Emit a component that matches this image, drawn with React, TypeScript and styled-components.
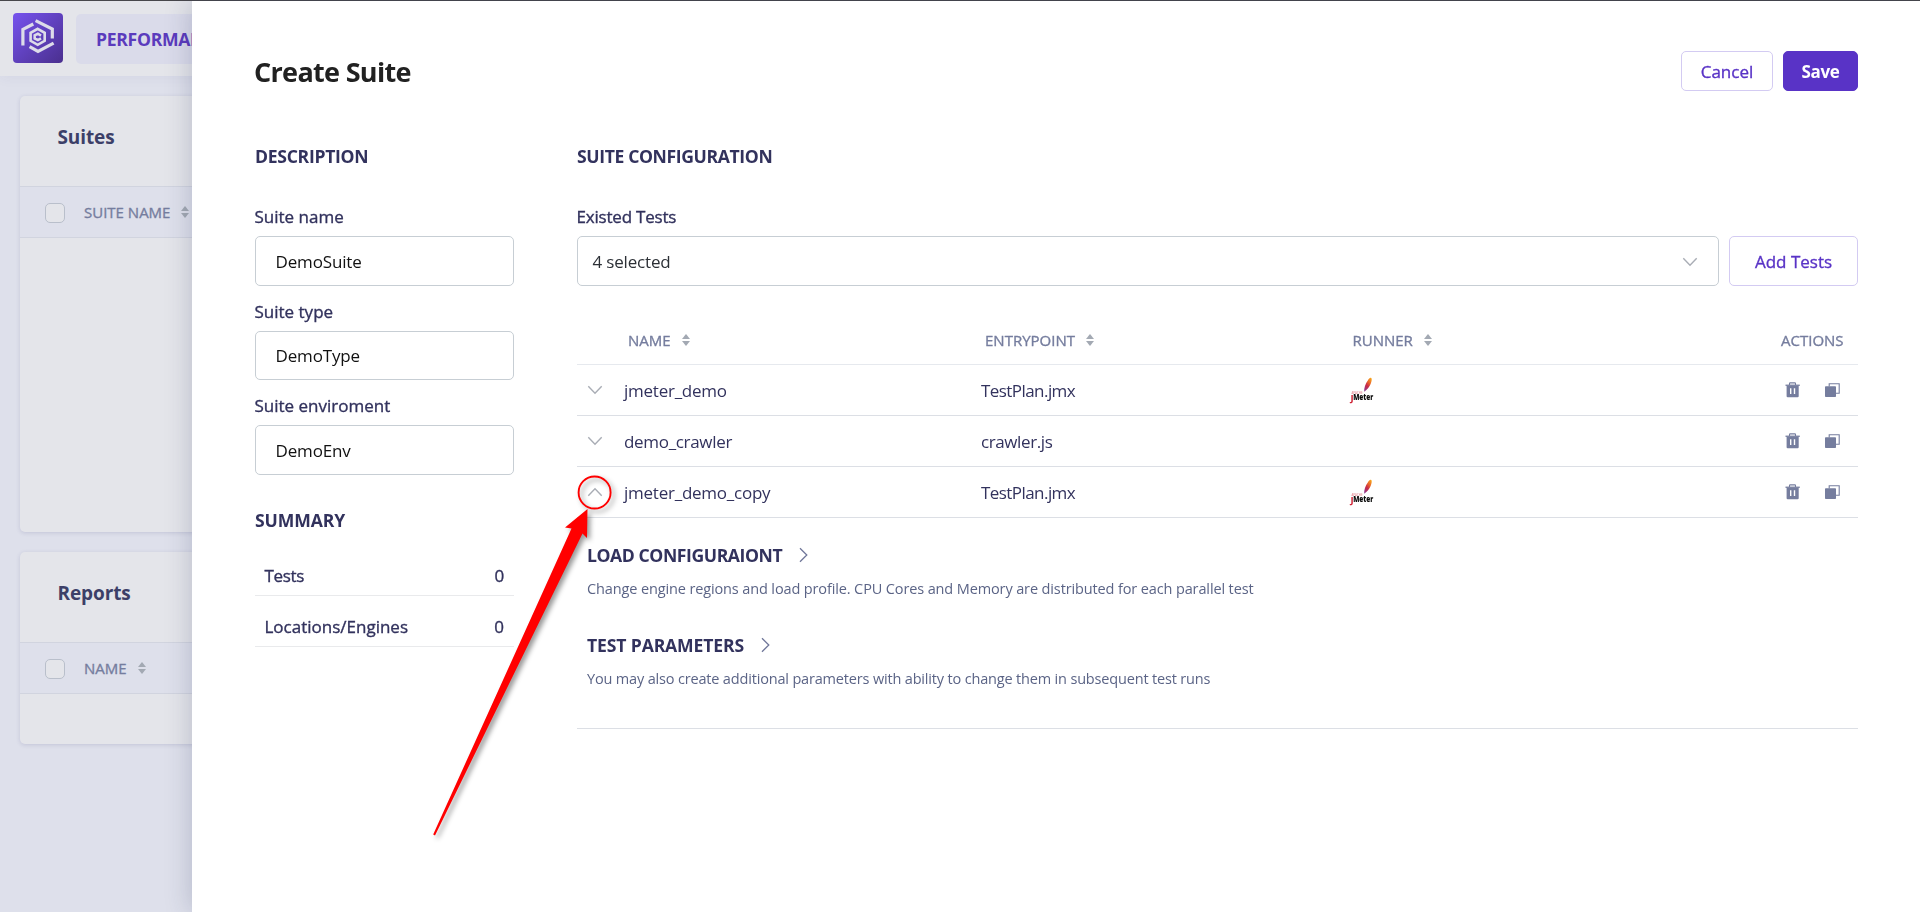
import React from 'react';
import styled, { createGlobalStyle, css } from 'styled-components';

const color = {
  text: '#32325d',
  muted: '#757d9e',
  desc: '#5b6486',
  accent: '#5933c6',
  accentLine: '#d3cbf2',
  inputLine: '#c7ced4',
  rowLine: '#dcdfe5',
};

const GlobalStyle = createGlobalStyle`
  *, *::before, *::after { box-sizing: border-box; }
  body {
    margin: 0;
    height: 912px;
    overflow: hidden;
    background: #dee0eb;
    font-family: "Segoe UI", "Open Sans", "Noto Sans", sans-serif;
    font-size: 17px;
    color: ${color.text};
  }
`;

type Tracked = { $track?: number };
const tracking = css<Tracked>`
  letter-spacing: ${({ $track = 0 }) => $track}px;
`;

/* Weight between medium and semibold, without widening the glyphs */
const semibold = css`
  font-weight: 500;
  -webkit-text-stroke: 0.35px currentColor;
`;

/* Page behind the drawer */

const Page = styled.div`
  height: 912px;
  display: flex;
  flex-direction: column;
  overflow: hidden;
  border-top: 1px solid #47474b;
`;

const Navbar = styled.header`
  height: 75px;
  flex: none;
  padding: 12px 13px;
  display: flex;
  gap: 13px;
  background: #e4e5ea;
  box-shadow: 0 2px 12px rgba(50, 50, 110, 0.05);
`;

const NavTab = styled.div`
  height: 50px;
  margin-top: 1px;
  padding: 0 20px;
  border-radius: 5px;
  background: #dadbea;
  color: #5b3bbd;
  font-size: 17.6px;
  font-weight: 700;
  letter-spacing: -0.3px;
  line-height: 50px;
`;

const Cards = styled.main`
  display: flex;
  flex-direction: column;
  gap: 20px;
  padding: 20px;
`;

const Card = styled.section<{ $height: number }>`
  height: ${({ $height }) => $height}px;
  border-radius: 5px;
  background: #e4e5ea;
  box-shadow: 0 1px 4px rgba(50, 50, 120, 0.16);
`;

const CardTitle = styled.h2`
  margin: 0;
  height: 90px;
  padding: 0 37.5px 7px;
  font-size: 19px;
  font-weight: 700;
  line-height: 83px;
  letter-spacing: -0.1px;
  color: #3c3f68;
`;

const CardHead = styled.div`
  height: 52px;
  padding-left: 25px;
  display: flex;
  align-items: center;
  gap: 19px;
  background: #dee0eb;
  border: 1px solid #d1d4df;
  border-width: 1px 0;
`;

const Checkbox = styled.span`
  width: 20px;
  height: 20px;
  margin-top: 2px;
  border: 1px solid #b9bfcb;
  border-radius: 5px;
  background: #e4e5ea;
`;

/* Drawer */

const Drawer = styled.aside`
  position: fixed;
  top: 1px;
  left: 192px;
  right: 0;
  bottom: 0;
  padding: 50px 62px 0 63px;
  background: #fff;
  box-shadow: -2px 0 24px rgba(40, 45, 90, 0.21);
`;

const DrawerHeader = styled.header`
  display: flex;
  align-items: center;
  gap: 10px;
  height: 40px;
  margin-bottom: 53px;
`;

const Title = styled.h1`
  margin: 2px auto 0 -1px;
  font-size: 27px;
  font-weight: 700;
  line-height: 40px;
  letter-spacing: -0.68px;
  color: #212121;
`;

const Button = styled.button<{ $primary?: boolean; $width: number; $height: number }>`
  flex: none;
  width: ${({ $width }) => $width}px;
  height: ${({ $height }) => $height}px;
  padding: 0;
  border: 1px solid ${({ $primary }) => ($primary ? color.accent : color.accentLine)};
  border-radius: 5px;
  background: ${({ $primary }) => ($primary ? color.accent : '#fff')};
  color: ${({ $primary }) => ($primary ? '#fff' : color.accent)};
  font-family: inherit;
  font-size: 17px;
  ${({ $primary }) => ($primary ? css`font-weight: 700; letter-spacing: -0.3px;` : semibold)}
`;

const Columns = styled.div`
  display: grid;
  grid-template-columns: 259px 1fr;
  column-gap: 63px;
`;

const Heading = styled.h3<Tracked>`
  margin: 0;
  font-size: 17.6px;
  font-weight: 700;
  line-height: 24px;
  white-space: nowrap;
  ${tracking}
`;

const Label = styled.div<Tracked>`
  margin: 0 0 7px -0.5px;
  padding-top: 1px;
  line-height: 24px;
  ${semibold}
  ${tracking}
`;

const Fields = styled.div`
  display: flex;
  flex-direction: column;
  gap: 13px;
  margin: 36px 0 33px;
`;

const Input = styled.input`
  display: block;
  width: 100%;
  height: 49.5px;
  padding: 1px 20px 0 19.5px;
  border: 1px solid ${color.inputLine};
  border-radius: 5px;
  outline: none;
  font-family: inherit;
  font-size: 17px;
  letter-spacing: -0.15px;
  color: #111;
`;

const SummaryList = styled.div`
  margin-top: 13.5px;
`;

const SummaryRow = styled.div<Tracked>`
  display: flex;
  align-items: flex-end;
  justify-content: space-between;
  height: 51px;
  padding: 0 10px 7px 9.5px;
  border-bottom: 1px solid #e9eaec;
  line-height: 24px;
  ${semibold}
  ${tracking}
`;

const Picker = styled.div`
  margin: 36px 0 30px;
`;

const PickerRow = styled.div`
  display: flex;
  gap: 10px;
`;

const Select = styled.div`
  flex: 1;
  height: 50px;
  padding: 1px 20px 0 14.5px;
  display: flex;
  align-items: center;
  justify-content: space-between;
  border: 1px solid ${color.inputLine};
  border-radius: 5px;
  color: #2c3036;
  letter-spacing: -0.18px;
`;

const tableGrid = css`
  display: grid;
  grid-template-columns: 47px 357px 369px 1fr 85px;
  align-items: center;
`;

const TableHead = styled.div`
  ${tableGrid}
  height: 49px;
  border-bottom: 1px solid #e6e9ee;
`;

const HeadCell = styled.div<{ $pad?: number }>`
  display: flex;
  align-items: center;
  gap: 11px;
  padding-left: ${({ $pad = 0 }) => $pad}px;
  font-size: 15px;
  line-height: 20px;
  white-space: nowrap;
  color: ${color.muted};
  ${semibold}
`;

const Row = styled.div`
  ${tableGrid}
  height: 51px;
  border-bottom: 1px solid ${color.rowLine};
`;

const Cell = styled.div<Tracked>`
  padding-top: 2px;
  line-height: 24px;
  white-space: nowrap;
  ${tracking}
`;

const ToggleCell = styled.div`
  display: flex;
  padding: 0 0 1px 9.5px;
`;

const RunnerCell = styled.div`
  display: flex;
`;

const Actions = styled.div`
  display: flex;
  gap: 23px;
  padding-left: 12px;
`;

const Details = styled.div`
  padding: 25px 0 39px 10px;
  border-bottom: 1px solid ${color.rowLine};
`;

const DetailBlock = styled.section`
  & + & { margin-top: 34px; }
`;

const DetailTitle = styled.div`
  display: flex;
  align-items: center;
  gap: 17px;
`;

const DetailText = styled.p<Tracked>`
  margin: 12px 0 0;
  font-size: 14.5px;
  line-height: 20px;
  color: ${color.desc};
  ${tracking}
`;

const Pointer = styled.svg`
  position: fixed;
  left: 0;
  top: 0;
  pointer-events: none;
  filter: drop-shadow(3px 3px 2.5px rgba(0, 0, 0, 0.4));
`;

/* Icons */

const Logo = () => (
  <svg width="50" height="50" viewBox="0 0 50 50" fill="none" stroke="#dddce9">
    <defs>
      <linearGradient id="logoFill" x1="0" y1="0" x2="1" y2="1">
        <stop offset="0" stopColor="#7653ee" />
        <stop offset="1" stopColor="#4a2f8e" />
      </linearGradient>
    </defs>
    <rect width="50" height="50" rx="4" fill="url(#logoFill)" stroke="none" />
    <g strokeWidth="3.2">
      <path d="M20.3 11 9.9 16.4V32.6" />
      <path d="M22.6 7.6 39.3 16V25.4" />
      <path d="M16.6 33.6 25 38.4 40.6 30.2" />
    </g>
    <path d="M24.7 15.8 31.7 19.8V27.8L24.7 31.8 17.6 27.8V19.8Z" strokeWidth="2.6" />
    <path d="M28 22.6 24.9 20.7 21.7 22.4V25.4L24.9 27.1 28 25.3" strokeWidth="2.6" />
  </svg>
);

const SortIcon = () => (
  <svg width="8" height="12" viewBox="0 0 8 12" fill="#a3a9b3">
    <path d="M4 0 8 5H0Z" />
    <path d="M0 7H8L4 12Z" />
  </svg>
);

const turns = { down: 0, up: 180 };
const Chevron = ({ dir }: { dir: keyof typeof turns }) => (
  <svg width="16" height="10" viewBox="0 0 16 10" fill="none" stroke="#a9adb5" strokeWidth="1.4">
    <path d="M1.3 1.3 8 8.3 14.7 1.3" transform={`rotate(${turns[dir]} 8 5)`} />
  </svg>
);

const ChevronRight = () => (
  <svg width="9" height="16" viewBox="0 0 9 16" fill="none" stroke="#70779a" strokeWidth="1.3">
    <path d="M1 1.2 7.8 8 1 14.8" />
  </svg>
);

const TrashIcon = () => (
  <svg width="16" height="16" viewBox="0 0 16 16" fill={color.muted}>
    <path d="M4.5 3V1.6Q4.5 .9 5.2 .9H9.8Q10.5 .9 10.5 1.6V3" fill="none" stroke={color.muted} strokeWidth="1.1" />
    <path d="M.5 2.6H14.8V3.9H.5Z" />
    <path fillRule="evenodd" d="M1.6 3.8H13.7V14.2Q13.7 15.3 12.6 15.3H2.7Q1.6 15.3 1.6 14.2ZM5 6.2V12H6.4V6.2ZM8.8 6.2V12H10.2V6.2Z" />
  </svg>
);

const CopyIcon = () => (
  <svg width="16" height="16" viewBox="0 0 16 16" fill={color.muted}>
    <path d="M5.2 4.6V1.7H15.2V11.3H12" fill="none" stroke={color.muted} strokeWidth="1.1" />
    <rect x="1" y="4.3" width="11" height="10.7" rx=".8" />
  </svg>
);

const JMeterSvg = styled.svg`
  display: block;
  overflow: visible;
  font-family: "Open Sans", sans-serif;
`;

const JMeterLogo = () => (
  <JMeterSvg width="28" height="26" viewBox="0 0 28 26">
    <defs>
      <linearGradient id="feather" x1="0.8" y1="0" x2="0.2" y2="1">
        <stop offset="0" stopColor="#f6a21c" />
        <stop offset="0.3" stopColor="#ea6a2b" />
        <stop offset="0.6" stopColor="#c92a48" />
        <stop offset="1" stopColor="#8e3a8f" />
      </linearGradient>
    </defs>
    <path d="M20.8 .8C22.3 1.3 21.8 4.3 20.5 7.3 19.3 10.1 17.3 12.7 14.2 14.7 13.8 10.9 15.5 6.7 17.8 3.4 18.9 1.7 19.8 .6 20.8 .8Z" fill="url(#feather)" />
    <text x="1.5" y="17" fontSize="3.6" fontWeight="600" fill="#e58a94" textLength="11" lengthAdjust="spacingAndGlyphs">APACHE</text>
    <text x=".6" y="23.6" fontSize="9.5" fontWeight="700" fill="#cf2335">J</text>
    <text x="3.2" y="23.2" fontSize="7.8" fontWeight="800" fill="#0b0b0b" textLength="20" lengthAdjust="spacingAndGlyphs">Meter</text>
  </JMeterSvg>
);

/* Data */

const fields = [
  { label: 'Suite name', value: 'DemoSuite', track: 0 },
  { label: 'Suite type', value: 'DemoType', track: 0 },
  { label: 'Suite enviroment', value: 'DemoEnv', track: 0 },
];

const tests = [
  { name: 'jmeter_demo', entry: 'TestPlan.jmx', jmeter: true, open: false, track: [-0.25, -0.56] },
  { name: 'demo_crawler', entry: 'crawler.js', jmeter: false, open: false, track: [-0.32, -0.4] },
  { name: 'jmeter_demo_copy', entry: 'TestPlan.jmx', jmeter: true, open: true, track: [-0.24, -0.56] },
];

export default function App() {
  return (
    <>
      <GlobalStyle />
      <Page>
        <Navbar>
          <Logo />
          <NavTab>PERFORMANCE</NavTab>
        </Navbar>
        <Cards>
          <Card $height={436}>
            <CardTitle>Suites</CardTitle>
            <CardHead>
              <Checkbox />
              <HeadCell>SUITE NAME <SortIcon /></HeadCell>
            </CardHead>
          </Card>
          <Card $height={192}>
            <CardTitle>Reports</CardTitle>
            <CardHead>
              <Checkbox />
              <HeadCell>NAME <SortIcon /></HeadCell>
            </CardHead>
          </Card>
        </Cards>
      </Page>

      <Drawer>
        <DrawerHeader>
          <Title>Create Suite</Title>
          <Button $width={92} $height={40}>Cancel</Button>
          <Button $primary $width={75} $height={40}>Save</Button>
        </DrawerHeader>

        <Columns>
          <div>
            <Heading $track={-0.3}>DESCRIPTION</Heading>
            <Fields>
              {fields.map((f) => (
                <div key={f.label}>
                  <Label $track={f.track}>{f.label}</Label>
                  <Input defaultValue={f.value} />
                </div>
              ))}
            </Fields>
            <Heading $track={-0.1}>SUMMARY</Heading>
            <SummaryList>
              <SummaryRow $track={-0.3}><span>Tests</span><span>0</span></SummaryRow>
              <SummaryRow><span>Locations/Engines</span><span>0</span></SummaryRow>
            </SummaryList>
          </div>

          <div>
            <Heading $track={-0.38}>SUITE CONFIGURATION</Heading>
            <Picker>
              <Label $track={-0.2}>Existed Tests</Label>
              <PickerRow>
                <Select>4 selected <Chevron dir="down" /></Select>
                <Button $width={129} $height={50}>Add Tests</Button>
              </PickerRow>
            </Picker>

            <TableHead>
              <span />
              <HeadCell $pad={4}>NAME <SortIcon /></HeadCell>
              <HeadCell $pad={4}>ENTRYPOINT <SortIcon /></HeadCell>
              <HeadCell $pad={2.5}>RUNNER <SortIcon /></HeadCell>
              <HeadCell $pad={8}>ACTIONS</HeadCell>
            </TableHead>
            {tests.map((t) => (
              <Row key={t.name}>
                <ToggleCell><Chevron dir={t.open ? 'up' : 'down'} /></ToggleCell>
                <Cell $track={t.track[0]}>{t.name}</Cell>
                <Cell $track={t.track[1]}>{t.entry}</Cell>
                <RunnerCell>{t.jmeter && <JMeterLogo />}</RunnerCell>
                <Actions><TrashIcon /><CopyIcon /></Actions>
              </Row>
            ))}
            <Details>
              <DetailBlock>
                <DetailTitle>
                  <Heading $track={-0.42}>LOAD CONFIGURAIONT</Heading>
                  <ChevronRight />
                </DetailTitle>
                <DetailText $track={-0.125}>
                  Change engine regions and load profile. CPU Cores and Memory are distributed for each parallel test
                </DetailText>
              </DetailBlock>
              <DetailBlock>
                <DetailTitle>
                  <Heading $track={-0.15}>TEST PARAMETERS</Heading>
                  <ChevronRight />
                </DetailTitle>
                <DetailText $track={-0.17}>
                  You may also create additional parameters with ability to change them in subsequent test runs
                </DetailText>
              </DetailBlock>
            </Details>
          </div>
        </Columns>
      </Drawer>

      <Pointer width="1920" height="912" viewBox="0 0 1920 912">
        <circle cx="594.6" cy="492.5" r="16" fill="none" stroke="#f00" strokeWidth="1.9" />
        <path d="M587.5 509 587 538 582.5 533.5 435 835.5 433.2 834.5 571.5 528.5 565 527.5Z" fill="#f00" />
      </Pointer>
    </>
  );
}
